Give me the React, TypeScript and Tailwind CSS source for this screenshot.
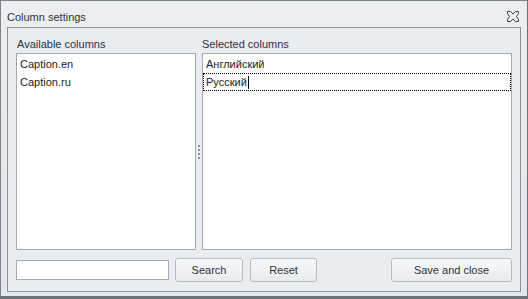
export default function App() {
  const font = { fontFamily: '"Segoe UI", "Liberation Sans", Arial, sans-serif' };
  return (
    <div className="w-[528px] h-[299px] bg-[#6b737c] text-[11px] text-[#1b1b1b]" style={font}>
      <div className="w-[527px] h-[296px] flex flex-col bg-gradient-to-b from-[#eceef1] to-[#e3e6ea] border-l border-t border-[#7a828c]">
        {/* title bar */}
        <div className="h-[26px] flex items-center justify-between pl-[6px] pr-[8px]">
          <span className="text-[#2c3440] leading-none mt-[7px]">Column settings</span>
          <svg width="12" height="11" viewBox="0 0 12 11" className="mt-[5px]">
            <path
              d="M0.5 0.5 H3.5 L6 3 L8.5 0.5 H11.5 V2.5 L9.5 5.5 L11.5 8.5 V10.5 H8.5 L6 8 L3.5 10.5 H0.5 V8.5 L2.5 5.5 L0.5 2.5 Z"
              fill="none"
              stroke="#3a3f46"
              strokeWidth="1"
            />
          </svg>
        </div>
        {/* body */}
        <div className="flex-1 ml-[6px] mr-[6px] mb-[4px] border border-[#8b929b] bg-[#e9ecf0] flex flex-col px-[8px] pt-[8px]">
          <div className="flex h-[214px]">
            <div className="w-[180px] flex flex-col">
              <div className="h-[17px] pl-[1px] leading-[17px] text-[#2c3440]">Available columns</div>
              <div className="flex-1 bg-white border border-[#a3a9b2] pt-[1px]">
                <div className="h-[18px] leading-[18px] pl-[3px]">Caption.en</div>
                <div className="h-[18px] leading-[18px] pl-[3px]">Caption.ru</div>
              </div>
            </div>
            <div className="w-[6px] flex flex-col items-center justify-center gap-[2px] pt-[17px]">
              <div className="w-[2px] h-[2px] bg-[#8c939c]" />
              <div className="w-[2px] h-[2px] bg-[#8c939c]" />
              <div className="w-[2px] h-[2px] bg-[#8c939c]" />
              <div className="w-[2px] h-[2px] bg-[#8c939c]" />
            </div>
            <div className="flex-1 flex flex-col">
              <div className="h-[17px] leading-[17px] text-[#2c3440]">Selected columns</div>
              <div className="flex-1 bg-white border border-[#a3a9b2] pt-[1px]">
                <div className="h-[18px] leading-[18px] pl-[3px]">Английский</div>
                <div className="h-[18px] leading-[17px] pl-[2px] border border-dotted border-black flex items-center">
                  <span>Русский</span>
                  <span className="w-px h-[13px] bg-black ml-px" />
                </div>
              </div>
            </div>
          </div>
          <div className="flex items-center h-[40px]">
            <div className="w-[153px] h-[20px] bg-white border border-[#a3a9b2]" />
            <button className="ml-[6px] w-[68px] h-[24px] rounded-[3px] border border-[#b7bcc3] bg-gradient-to-b from-[#f8f9fa] to-[#e8eaed] text-[#2c3440]">
              Search
            </button>
            <button className="ml-[7px] w-[67px] h-[24px] rounded-[3px] border border-[#b7bcc3] bg-gradient-to-b from-[#f8f9fa] to-[#e8eaed] text-[#2c3440]">
              Reset
            </button>
            <button className="ml-auto w-[121px] h-[24px] rounded-[3px] border border-[#b7bcc3] bg-gradient-to-b from-[#f8f9fa] to-[#e8eaed] text-[#2c3440]">
              Save and close
            </button>
          </div>
        </div>
      </div>
    </div>
  );
}
